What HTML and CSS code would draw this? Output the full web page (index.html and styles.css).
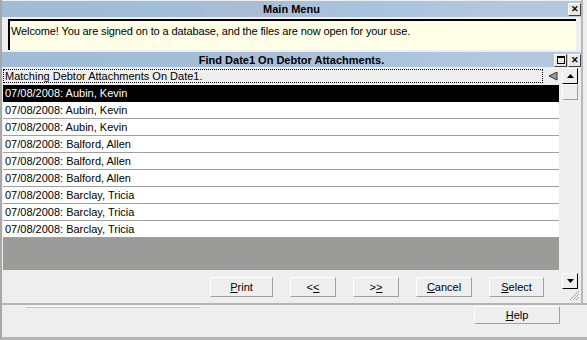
FILE: index.html
```html
<!DOCTYPE html>
<html lang="en">
<head>
  <meta charset="UTF-8" />
  <title>Find Date1 On Debtor Attachments</title>
  <link rel="stylesheet" href="styles.css">
</head>
<body>
  <div class="app">
    <div class="pane">
      <div class="titlebar">
        <span class="title">Main Menu</span>
        <span class="tb-btns"><span class="tb-btn">&#x2715;</span></span>
      </div>

      <div class="welcome">Welcome! You are signed on to a database, and the files are now open for your use.</div>

      <div class="titlebar titlebar-sub">
        <span class="title">Find Date1 On Debtor Attachments.</span>
        <span class="tb-btns">
          <span class="tb-btn"><span class="max-box"></span></span>
          <span class="tb-btn">&#x2715;</span>
        </span>
      </div>

      <div class="finder">
        <div class="listcol">
          <div class="list">
            <div class="list-head">
              <span class="caption">Matching Debtor Attachments On Date1.</span>
              <svg class="sort-icon" width="10" height="9" viewBox="0 0 10 9">
                <polygon points="9,0 9,8 1,4" fill="#9a9a9a" stroke="#333" stroke-width="1"/>
              </svg>
            </div>
            <div class="row selected">07/08/2008: Aubin, Kevin</div>
            <div class="row">07/08/2008: Aubin, Kevin</div>
            <div class="row">07/08/2008: Aubin, Kevin</div>
            <div class="row">07/08/2008: Balford, Allen</div>
            <div class="row">07/08/2008: Balford, Allen</div>
            <div class="row">07/08/2008: Balford, Allen</div>
            <div class="row">07/08/2008: Barclay, Tricia</div>
            <div class="row">07/08/2008: Barclay, Tricia</div>
            <div class="row">07/08/2008: Barclay, Tricia</div>
            <div class="list-fill"></div>
          </div>
          <div class="actions">
            <button class="btn btn-print"><u>P</u>rint</button>
            <button class="btn btn-nav">&lt;<u>&lt;</u></button>
            <button class="btn btn-nav">&gt;<u>&gt;</u></button>
            <button class="btn btn-cancel"><u>C</u>ancel</button>
            <button class="btn btn-select"><u>S</u>elect</button>
          </div>
        </div>

        <div class="vscroll">
          <div class="sb-btn">
            <svg width="7" height="4" viewBox="0 0 7 4"><polygon points="3.5,0 7,4 0,4" fill="#000"/></svg>
          </div>
          <div class="sb-thumb"></div>
          <div class="sb-track"></div>
          <div class="sb-btn">
            <svg width="7" height="4" viewBox="0 0 7 4"><polygon points="0,0 7,0 3.5,4" fill="#000"/></svg>
          </div>
          <svg class="grip" width="11" height="11" viewBox="0 0 11 11">
            <path d="M10 1 L1 10 M10 4 L4 10 M10 7 L7 10" stroke="#a0a0a0" stroke-width="1"/>
            <path d="M10 2 L2 10 M10 5 L5 10 M10 8 L8 10" stroke="#fff" stroke-width="1"/>
          </svg>
        </div>
      </div>
    </div>

    <div class="footer">
      <div class="status-strip"></div>
      <button class="btn btn-help"><u>H</u>elp</button>
    </div>
  </div>
</body>
</html>
```

FILE: styles.css
```css
body {
  margin: 0;
  width: 587px;
  height: 340px;
  overflow: hidden;
  background: #eeeeee;
  font-family: 'Liberation Sans', Arial, sans-serif;
  font-size: 11px;
  color: #000;
}

.app {
  box-sizing: border-box;
  height: 340px;
  border-left: 2px solid #a8a8a8;
  border-bottom: 3px solid #b4b4b4;
  display: flex;
  flex-direction: column;
}

.pane {
  width: 581px;
  height: 303px;
  border-right: 2px solid #b8b8b8;
  padding-top: 1px;
  box-sizing: border-box;
  display: flex;
  flex-direction: column;
}

/* title bars */
.titlebar {
  height: 16px;
  display: grid;
  grid-template-columns: 1fr auto 1fr;
  align-items: center;
  background: linear-gradient(to right, #a0bbd5 0%, #9fbed8 25%, #abbdd5 45%, #a7c3dd 62%, #b0c6df 80%, #b4c8e0 100%);
}

.titlebar .title {
  grid-column: 2;
  font-weight: bold;
  font-size: 11px;
  line-height: 16px;
}

.tb-btns {
  grid-column: 3;
  justify-self: end;
  display: flex;
  gap: 1px;
}

.tb-btn {
  width: 13px;
  height: 13px;
  box-sizing: border-box;
  background: #e8e8e8;
  border: 1px solid;
  border-color: #fff #404040 #404040 #fff;
  display: flex;
  align-items: center;
  justify-content: center;
  font-size: 9px;
  font-weight: bold;
  line-height: 1;
}

.max-box {
  width: 6px;
  height: 5px;
  border: 1px solid #000;
  border-top-width: 2px;
}

.titlebar-sub {
  height: 15px;
  margin-top: 2px;
}

.welcome {
  margin: 2px 5px 0 6px;
  height: 31px;
  box-sizing: border-box;
  background: #ffffe8;
  border-top: 2px solid #000;
  border-left: 2px solid #000;
  padding: 4px 0 0 1px;
  letter-spacing: -0.12px;
}

/* list */
.finder {
  flex: 1;
  display: flex;
  padding-left: 1px;
}

.listcol {
  width: 557px;
  display: flex;
  flex-direction: column;
}

.list {
  display: flex;
  flex-direction: column;
  height: 203px;
}

.list-head {
  height: 18px;
  box-sizing: border-box;
  display: flex;
  align-items: center;
}

.caption {
  width: 540px;
  height: 14px;
  box-sizing: border-box;
  border: 1px dotted #000;
  padding-left: 1px;
  line-height: 12px;
  white-space: nowrap;
}

.sort-icon {
  margin-left: 5px;
}

.row {
  height: 17px;
  box-sizing: border-box;
  background: #fff;
  border-bottom: 1px solid #a0a0a0;
  padding-left: 2px;
  line-height: 16px;
}

.row.selected {
  background: #000;
  color: #fff;
  border-bottom-color: #000;
}

.list-fill {
  flex: 1;
  background: #9b9c9a;
}

.actions {
  display: flex;
  justify-content: flex-end;
  gap: 17px;
  padding: 7px 15px 0 0;
}

.btn {
  height: 20px;
  box-sizing: border-box;
  background: #eeeeee;
  border: 1px solid;
  border-color: #fff #a0a0a0 #a0a0a0 #fff;
  font-family: 'Liberation Sans', Arial, sans-serif;
  font-size: 11px;
  color: #000;
  padding: 0;
}

.btn-print { width: 63px; }
.btn-nav { width: 46px; }
.btn-cancel { width: 56px; }
.btn-select { width: 55px; }

/* scrollbar */
.vscroll {
  width: 22px;
  display: flex;
  flex-direction: column;
  align-items: flex-start;
  padding-left: 3px;
  padding-top: 1px;
  box-sizing: border-box;
}

.sb-btn {
  width: 16px;
  height: 16px;
  box-sizing: border-box;
  background: #eeeeee;
  border: 1px solid;
  border-color: #fff #000 #000 #fff;
  display: flex;
  align-items: center;
  justify-content: center;
}

.sb-thumb {
  width: 16px;
  height: 16px;
  box-sizing: border-box;
  background: #eeeeee;
  border: 1px solid;
  border-color: #fff #a0a0a0 #a0a0a0 #fff;
}

.sb-track {
  flex: 1;
}

.grip {
  margin: 1px 0 2px 7px;
}

/* footer */
.footer {
  flex: 1;
  border-top: 2px solid #b4b4b4;
  display: flex;
  justify-content: space-between;
  align-items: flex-start;
  padding: 1px 27px 0 24px;
}

.status-strip {
  width: 174px;
  height: 1px;
  border-top: 1px solid #fff;
  background: #c0c0c0;
}

.btn-help {
  width: 86px;
  height: 18px;
}
```
